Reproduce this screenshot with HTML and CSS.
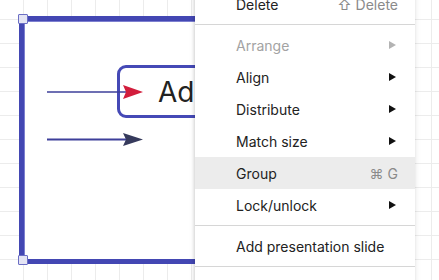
FILE: index.html
```html
<!DOCTYPE html>
<html lang="en">
<head>
    <meta charset="UTF-8">
    <title>Diagram - context menu</title>
    <link rel="stylesheet" href="styles.css">
</head>
<body>
    <div class="canvas">
        <div class="selection"></div>
        <div class="handle handle-top"></div>
        <div class="handle handle-bottom"></div>

        <div class="node"><span class="node-label">Add step</span></div>

        <svg class="arrows" width="200" height="160" viewBox="0 0 200 160">
            <line x1="47" y1="92" x2="126" y2="92" stroke="#3d3f9a" stroke-width="1.6"/>
            <polygon points="123,85 143,92 123,99 126,92" fill="#d21d3c"/>
            <line x1="47" y1="139.5" x2="126" y2="139.5" stroke="#3d3f9a" stroke-width="2"/>
            <polygon points="123,133 143,139.5 123,146 126,139.5" fill="#363a5c"/>
        </svg>

        <ul class="menu">
            <li class="item"><span>Delete</span><span class="shortcut">⇧ Delete</span></li>
            <li class="sep"></li>
            <li class="item disabled"><span>Arrange</span><span class="caret"></span></li>
            <li class="item"><span>Align</span><span class="caret"></span></li>
            <li class="item"><span>Distribute</span><span class="caret"></span></li>
            <li class="item"><span>Match size</span><span class="caret"></span></li>
            <li class="item active"><span>Group</span><span class="shortcut">⌘ G</span></li>
            <li class="item"><span>Lock/unlock</span><span class="caret"></span></li>
            <li class="sep"></li>
            <li class="item"><span>Add presentation slide</span></li>
            <li class="sep"></li>
        </ul>
    </div>
</body>
</html>
```

FILE: styles.css
```css
* {
    margin: 0;
    padding: 0;
    box-sizing: border-box;
}

body {
    font-family: Inter, 'Noto Sans', sans-serif;
    background: #fff;
    overflow: hidden;
}

.canvas {
    position: relative;
    width: 439px;
    height: 280px;
    overflow: hidden;
    background-color: #fff;
    background-image:
        linear-gradient(to right, #ececec 1px, transparent 1px),
        linear-gradient(to bottom, #ececec 1px, transparent 1px);
    background-size: 24px 24px;
    background-position: 23px 19px;
}

.selection {
    position: absolute;
    left: 19px;
    top: 16px;
    width: 380px;
    height: 248px;
    background: #fff;
    border: 5px solid #4347b3;
    box-shadow: inset 1px 1px 0 #7d80d0;
}

.handle {
    position: absolute;
    left: 18px;
    width: 10px;
    height: 10px;
    background: #e4e4f4;
    border: 1px solid #6b6ec4;
    border-radius: 1px;
}

.handle-top {
    top: 14px;
}

.handle-bottom {
    top: 255px;
}

.node {
    position: absolute;
    left: 117px;
    top: 65px;
    width: 160px;
    height: 53px;
    border: 3px solid #4549b6;
    border-radius: 9px;
    background: #fff;
    display: flex;
    align-items: center;
    padding-left: 38px;
}

.node-label {
    font-size: 28px;
    color: #222;
    white-space: nowrap;
}

.arrows {
    position: absolute;
    left: 0;
    top: 0;
}

.menu {
    position: absolute;
    left: 195px;
    top: -12px;
    width: 220px;
    padding-bottom: 24px;
    list-style: none;
    background: #fff;
    box-shadow: -1px 0 3px rgba(0, 0, 0, 0.12), 0 2px 6px rgba(0, 0, 0, 0.1);
}

.item {
    height: 32px;
    display: flex;
    align-items: center;
    justify-content: space-between;
    padding: 0 17px 0 41px;
    font-size: 14px;
    color: #222;
}

.item.active {
    background: #ececec;
}

.item.disabled {
    color: #a3a3a3;
}

.shortcut {
    color: #8a8a8a;
    font-size: 14px;
}

.caret {
    width: 0;
    height: 0;
    margin-right: 2px;
    border-top: 4.5px solid transparent;
    border-bottom: 4.5px solid transparent;
    border-left: 7px solid #111;
}

.disabled .caret {
    border-left-color: #b3b3b3;
}

.sep {
    height: 1px;
    margin: 4px 0;
    background: #d6d6d6;
}
```
